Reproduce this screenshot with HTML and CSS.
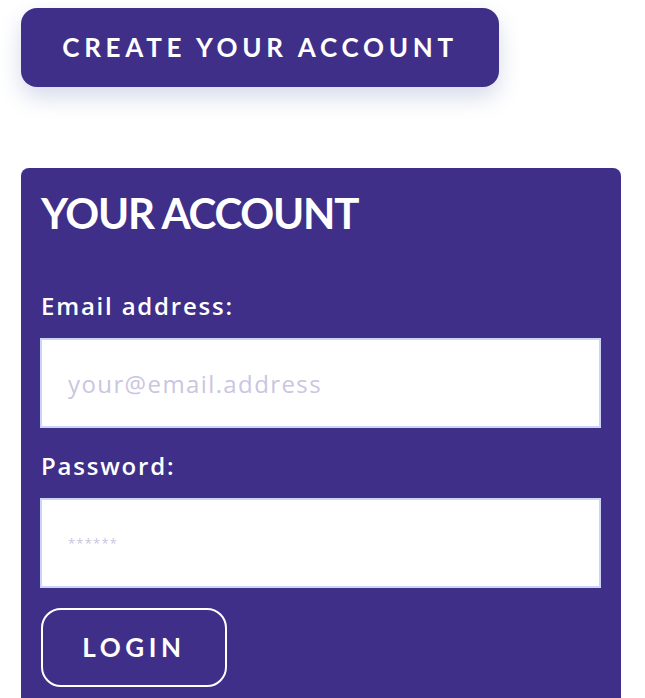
FILE: index.html
```html
<!DOCTYPE html>
<html lang="en">
<head>
    <meta charset="UTF-8">
    <meta name="viewport" content="width=device-width, initial-scale=1.0">
    <title>Your Account</title>
    <link rel="stylesheet" href="styles.css">
</head>
<body>
<div class="page">
    <button class="create-btn" type="button">Create your account</button>

    <div class="account-card">
        <h2 class="account-title">Your account</h2>
        <form class="login-form" onsubmit="return false">
            <label class="field-label" for="email">Email address:</label>
            <input class="field-input" type="email" id="email" placeholder="your@email.address">
            <label class="field-label second" for="password">Password:</label>
            <input class="field-input pass" type="password" id="password" placeholder="******">
            <button class="login-btn" type="submit">Login</button>
        </form>
    </div>
</div>
</body>
</html>
```

FILE: styles.css
```css
body {
    margin: 0;
    background: #ffffff;
    font-family: "Lato", "Open Sans", sans-serif;
}
.page {
    padding: 8px 24px 0 21px;
}
.create-btn {
    display: block;
    width: 478px;
    height: 79px;
    padding: 0 0 2px 0;
    background-color: #3f2f89;
    color: #ffffff;
    border: none;
    border-radius: 16px;
    box-shadow: 0 10px 22px rgba(70, 90, 160, 0.22);
    font-family: "Lato", sans-serif;
    font-weight: 700;
    font-size: 26px;
    letter-spacing: 4.7px;
    text-transform: uppercase;
    cursor: pointer;
}
.account-card {
    margin-top: 81px;
    width: 560px;
    height: 560px;
    padding: 17px 20px 0 20px;
    background-color: #3f2f89;
    border-radius: 8px 8px 0 0;
}
.account-title {
    margin: 0;
    color: #ffffff;
    font-family: "Lato", sans-serif;
    font-weight: 700;
    font-size: 42px;
    line-height: 56px;
    letter-spacing: -1.2px;
    text-transform: uppercase;
}
.login-form {
    display: flex;
    flex-direction: column;
    align-items: flex-start;
    margin-top: 50px;
}
.field-label {
    color: #ffffff;
    font-family: "Open Sans", sans-serif;
    font-weight: 600;
    font-size: 24px;
    line-height: 30px;
    letter-spacing: 1.8px;
    margin-bottom: 17px;
}
.field-label.second {
    margin-top: 23px;
}
.field-input {
    box-sizing: border-box;
    width: 561px;
    height: 90px;
    margin-left: -1px;
    padding: 0 26px;
    border: 2px solid #c9d5f6;
    background: #ffffff;
    font-family: "Open Sans", sans-serif;
    font-weight: 400;
    font-size: 24px;
    letter-spacing: 1.4px;
    color: #3f2f89;
    outline: none;
}
.field-input::placeholder {
    color: #c9c6df;
}
.field-input.pass {
    padding-bottom: 10px;
}
.field-input.pass::placeholder {
    font-size: 13px;
    letter-spacing: 1.2px;
}
.login-btn {
    margin-top: 20px;
    width: 186px;
    height: 79px;
    padding: 0 0 2px 0;
    background: transparent;
    color: #ffffff;
    border: 2px solid #ffffff;
    border-radius: 20px;
    font-family: "Lato", sans-serif;
    font-weight: 700;
    font-size: 26px;
    letter-spacing: 4.6px;
    text-transform: uppercase;
    cursor: pointer;
}
```
